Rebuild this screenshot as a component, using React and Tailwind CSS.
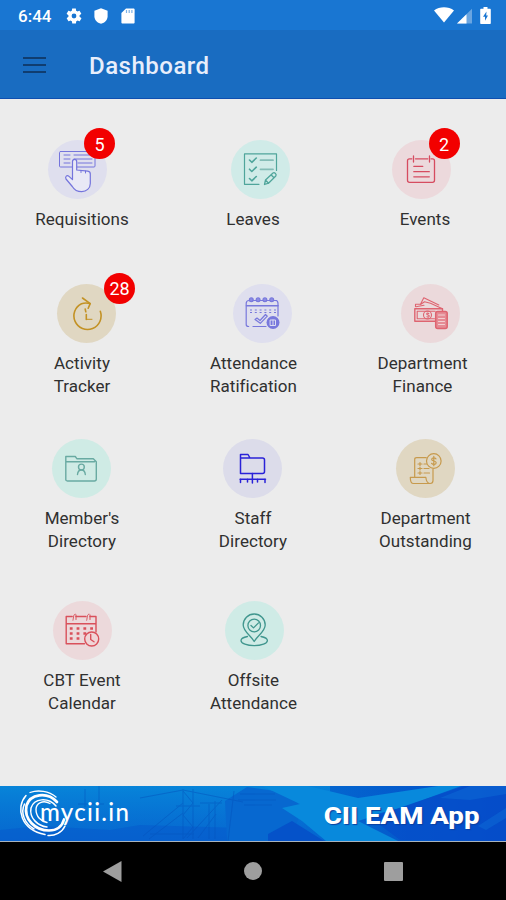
import React from "react";

const RequisitionIcon = () => (
  <g stroke="#7474dc" strokeWidth="1">
    <rect x="11.5" y="11.5" width="35.5" height="15.5" rx="1" />
    <path d="M16 15h6M16 19h6M16 23h6M26 15h18M26 19h18M30 23h14" />
    <path
      d="M24.5 37V21.5a2 2 0 0 1 4.2 0V30l11 1.2c2 .4 2.8 1.4 2.6 3.2v9c0 5-4 8.3-8.5 8.3-5 0-7.5-1.7-9.5-5.2L18 39c-1.2-2.6 1-4.2 3-2.6l3.5 3.200z"
      fill="#e9e9f6"
      strokeWidth="1.2"
    />
    <path d="M33 30.5v2M37.5 31v2" />
  </g>
);

const LeavesIcon = () => (
  <g stroke="#4fa59b" strokeWidth="1.2">
    <path d="M45.5 30.5V13.8H13.5v30.5h14.5" />
    <path d="M18.500 20l2.300 2.300 4.500-4.300M18.500 29.200l2.300 2.300 4.500-4.300M18.500 38.500l2.300 2.300 4.500-4.300" strokeWidth="1.6" />
    <path d="M29.5 20.2h12.500M29.5 29.300h12.500" stroke="#84bcb6" strokeWidth="1.8" />
    <path d="M33.5 44.5l1-4.5 7.500-7c1.500-1 4 1.300 2.800 3l-7.300 7.200zM34.500 40l3 3.200M40 34.800l3 3" strokeWidth="1.3" />
  </g>
);

const EventsIcon = () => (
  <g stroke="#d64c60" strokeWidth="1.3">
    <path d="M19.8 18.8H17.5a2 2 0 0 0-2 2v19.500a2 2 0 0 0 2 2h23a2 2 0 0 0 2-2V20.800a2 2 0 0 0-2-2h-1.500M23.500 18.800h12.300" />
    <path d="M21.5 16v6M37.5 16v6M21.8 26.3h9M21.8 31.7h15.500M21.8 36.8h15.500" />
  </g>
);

const TrackerIcon = () => (
  <g stroke="#c39225" strokeWidth="1.6">
    <path d="M43.3 27.3A13.6 13.6 0 1 1 24.500 19.700q4-1.300 8.500-.2" />
    <path d="M25.5 14l7.700 5.600-2 4.600" />
    <path d="M28.2 25l.6 2.800M29.300 30.500v5" />
    <path d="M30 35.300h5" strokeWidth="1" />
  </g>
);

const RatificationIcon = () => (
  <g stroke="#7878dc" strokeWidth="1.2">
    <path d="M16 16.500c-2 0-2.800 1-2.800 3v21c0 1.500 1 2 2.500 2M20 42.500h13M42.500 16.500c1.800 0 2.500 1 2.500 3V32" />
    <path d="M13.500 21.800h31.500" strokeWidth="1.600" />
    {[18.3, 25.1, 31.9, 38.7].map((x) => (
      <g key={x}>
        <circle cx={x} cy="15.800" r="1.900" fill="#8c8ce4" />
        <path d={`M${x + 2} 16.500h3`} />
      </g>
    ))}
    <path d="M17 26h26M17 28.500h26" strokeDasharray="2 2.800" strokeLinecap="butt" />
    <path d="M22 35.500l2-1.500 3 2.500 5.500-6 1.800 1.600-7 7.200z" />
    <circle cx="40" cy="38.500" r="6.500" fill="#7878dc" stroke="none" />
    <path d="M37.500 36h5v5.500h-5zM40 36v5" stroke="#dedef2" strokeWidth="1" />
  </g>
);

const FinanceIcon = () => (
  <g stroke="#de6470" strokeWidth="1.1">
    <path d="M14.500 22.500v-2.200h5l3.300-6.500 15 7.200M19.500 20.500l4-2.700 6 1.500 12 5.400M15 22.800l8-1.500" />
    <path d="M34 37.200H13.800V24.800h27.700v2" strokeWidth="1.4" />
    <path d="M33.500 34.800H16.200v-7.600h18" />
    <circle cx="26.500" cy="31" r="4" />
    <path d="M27.800 29.500c-2-1.200-3 1-.8 1.500s1 2.800-1 1.700" />
    <rect x="34.700" y="27.500" width="11.500" height="17" rx="2" fill="#e58b94" strokeWidth="1.500" />
    <path d="M37.500 31h6M37.500 34.500h6M37.500 37.500h6M37.500 40.500h6" stroke="#f2cfd2" />
  </g>
);

const MembersIcon = () => (
  <g stroke="#69aaa2" strokeWidth="1.4">
    <path d="M13.800 41V17.500h9.500l1.500 2.200h16.500l3 3V40a2 2 0 0 1-2 2H15.500a1.700 1.700 0 0 1-1.700-1.500zM14 22.700h28.500" />
    <circle cx="29.400" cy="28" r="2.900" />
    <path d="M25.500 35.500c.2-2.600 1.400-4.500 3.900-4.500s3.700 1.900 3.900 4.500" />
  </g>
);

const StaffIcon = () => (
  <g stroke="#2a22d8" strokeWidth="1.5">
    <path d="M17.500 34.500v-19h7.500l2 3.500h12.500a2 2 0 0 1 2 2v11.500a2 2 0 0 1-2 2zM17.500 19h9.500" />
    <path d="M29.400 34.500V44M17 40.300h25.500M17.500 40v3.500M24.500 40v3M34.500 40v3M42 40v3.500" />
  </g>
);

const OutstandingIcon = () => (
  <g stroke="#c79a4d" strokeWidth="1.2">
    <path d="M18.700 38.200V20.500c0-1.200.6-1.800 2-1.800h9.500M37 30v11.500c0 2-1 3-2.800 3H17.500c-2.200 0-3.200-2-3.200-6.200h15.500c.5 4 1.500 6.200 4 6.200" />
    <circle cx="37.800" cy="22" r="7.300" />
    <path d="M40 19.800c-1.300-1.500-4.300-1.200-4.300.6 0 2.200 4.500 1 4.500 3.300 0 1.900-3.300 2.200-4.600.6M37.800 17.300v9.400" />
    <path d="M22 25h4M22 29.500h4M22 34h4M24 23.500v3M24 28v3M24 32.500v3M28 25h2.500M28 29.500h5M28 34h5.500" />
  </g>
);

const CalendarIcon = () => (
  <g stroke="#d9505b" strokeWidth="1.4">
    <path d="M31.500 42.800H13.200V15.500h6M23 15.500h10M37 15.500h6V31M13.200 22.700H43" />
    <path d="M22.300 13.200c-2.200 0-1.500 3-2.300 6M36 13.200c-2.200 0-1.500 3-2.300 6M23 14v4.500M37 14v4.500" strokeWidth="1" />
    <path
      d="M16.800 27.500h24.500M16.800 32.500h17M16.800 37.500h12"
      strokeWidth="2.600"
      strokeDasharray="2.800 4"
      strokeLinecap="butt"
    />
    <circle cx="38.700" cy="38" r="7" fill="#f0d5d7" />
    <path d="M37.700 33.500v5l3.300 2.300" />
  </g>
);

const OffsiteIcon = () => (
  <g stroke="#40968e" strokeWidth="1.3">
    <path d="M22.500 35.500c-4 .8-6.500 2.200-6.500 4 0 3 6 5.200 13.200 5.200s13.200-2.200 13.200-5.200c0-1.800-2.400-3.200-6.400-4" />
    <path d="M29.200 40.500c-3-5.500-11-10-11-16.500a11 11 0 0 1 22 0c0 6.500-8 11-11 16.500z" />
    <circle cx="29.200" cy="24.500" r="6.300" />
    <path d="M26 24.500l2.500 2.400 5-5" />
  </g>
);

const rows = [
  {
    className: "mt-[41px] h-[143.5px]",
    items: [
      { lines: ["Requisitions"], Icon: RequisitionIcon, circle: "bg-[#dfdfee] mr-[9px]", badge: "5", badgeAt: "left-[36px] -top-[12px]" },
      { lines: ["Leaves"], Icon: LeavesIcon, circle: "bg-[#d0ebe8] ml-[14px]" },
      { lines: ["Events"], Icon: EventsIcon, circle: "bg-[#ecd9dc] mr-[6px]", badge: "2", badgeAt: "left-[37px] -top-[12px]", label: "ml-[2px]" },
    ],
  },
  {
    className: "h-[155.5px]",
    items: [
      { lines: ["Activity", "Tracker"], Icon: TrackerIcon, circle: "bg-[#e0d7c2] ml-[9px]", badge: "28", badgeAt: "left-[47px] -top-[11px]" },
      { lines: ["Attendance", "Ratification"], Icon: RatificationIcon, circle: "bg-[#dfdfee] ml-[19px]", label: "ml-[1px]" },
      { lines: ["Department", "Finance"], Icon: FinanceIcon, circle: "bg-[#ebd9db] ml-[12px]", label: "mr-[3px]" },
    ],
  },
  {
    className: "h-[162px]",
    items: [
      { lines: ["Member's", "Directory"], Icon: MembersIcon, circle: "bg-[#cfebe5] mr-[1px]" },
      { lines: ["Staff", "Directory"], Icon: StaffIcon, circle: "bg-[#dcdcea] mr-[1px]" },
      { lines: ["Department", "Outstanding"], Icon: OutstandingIcon, circle: "bg-[#e0d7c2] ml-[3px]", label: "ml-[3px]" },
    ],
  },
  {
    className: "h-[130px]",
    items: [
      { lines: ["CBT Event", "Calendar"], Icon: CalendarIcon, circle: "bg-[#ecd9db]" },
      { lines: ["Offsite", "Attendance"], Icon: OffsiteIcon, circle: "bg-[#cfebe6] ml-[2px]", label: "ml-[1px]" },
    ],
  },
];

const StatusBar = () => (
  <div className="flex h-[30px] shrink-0 items-center bg-[#1976d2] pl-[18px] pr-[15px] text-white">
    <span className="mt-[2px] w-[47px] text-[17px] font-medium leading-none">6:44</span>
    <svg className="mt-px size-[18px]" viewBox="0 0 24 24" fill="currentColor">
      <path d="M19.400 13a7.500 7.500 0 0 0 0-2l2.100-1.600c.2-.2.300-.4.100-.7l-2-3.400c-.1-.2-.4-.3-.6-.2l-2.500 1a7.500 7.500 0 0 0-1.700-1L14.500 2.400c0-.2-.2-.4-.5-.4h-4c-.3 0-.5.200-.5.400l-.4 2.700a7.500 7.500 0 0 0-1.700 1l-2.500-1c-.2-.1-.5 0-.6.2l-2 3.400c-.1.200-.1.500.1.700L4.600 11a7.500 7.500 0 0 0 0 2l-2.100 1.600c-.2.200-.3.400-.1.700l2 3.400c.1.200.4.300.6.2l2.500-1a7.500 7.500 0 0 0 1.700 1l.4 2.700c0 .2.200.4.500.4h4c.3 0 .5-.2.500-.4l.4-2.700a7.500 7.500 0 0 0 1.700-1l2.500 1c.2.100.5 0 .6-.2l2-3.400c.1-.2.1-.5-.1-.7zM12 15.200a3.200 3.200 0 1 1 0-6.400 3.200 3.200 0 0 1 0 6.400z" />
    </svg>
    <svg className="ml-[11px] mt-px h-[16px] w-[14px]" viewBox="0 0 14 16" fill="currentColor">
      <path d="M7 .3 13.600 2.800v5.400c0 3.600-2.700 6.500-6.600 7.500C3.100 14.700.4 11.800.4 8.200V2.800z" />
    </svg>
    <svg className="ml-[13px] mt-px h-[16px] w-[14px]" viewBox="0 0 14 16" fill="currentColor">
      <path d="M5 .4h7.400c.7 0 1.200.5 1.200 1.200v12.800c0 .7-.5 1.200-1.200 1.200H1.600c-.7 0-1.200-.5-1.200-1.200V5z" />
      <path d="M5.500 2v3M8.200 2v3M10.900 2v3" stroke="#7db2e6" strokeWidth="1.2" />
    </svg>
    <svg className="ml-auto h-[16px] w-[20px]" viewBox="0 0 20 16" fill="currentColor">
      <path d="M0 3.400C5.500-.8 14.500-.8 20 3.400L10 15.600z" />
    </svg>
    <svg className="ml-[3px] mt-px h-[16px] w-[15px]" viewBox="0 0 15 16" fill="currentColor">
      <path d="M0 15.500 15 .8v14.700z" opacity=".35" />
      <path d="M0 15.500 9.500 6.200v9.300z" />
    </svg>
    <svg className="ml-[8px] h-[17px] w-[11px]" viewBox="0 0 11 17" fill="currentColor">
      <path d="M3.500 0h4v1.800h2.300c.6 0 1 .4 1 1v13.100c0 .6-.4 1-1 1H1.200c-.6 0-1-.4-1-1V2.800c0-.6.4-1 1-1h2.300z" />
      <path d="M6.500 4.500 3 9.800h2v4l3-5.300H6.200z" fill="#1976d2" />
    </svg>
  </div>
);

const MenuItem = ({ item }) => {
  const { lines, Icon, circle, badge, badgeAt, label } = item;
  return (
    <div className="flex flex-col items-center">
      <div className={`relative size-[59px] shrink-0 rounded-full ${circle}`}>
        <svg className="size-[59px]" viewBox="0 0 59 59" fill="none" strokeLinecap="round" strokeLinejoin="round">
          <Icon />
        </svg>
        {badge && (
          <span
            className={`absolute flex size-[31px] items-center justify-center rounded-full bg-[#f20000] pt-px text-[18px] text-white ${badgeAt}`}
          >
            {badge}
          </span>
        )}
      </div>
      <div className={`mt-[9px] text-center text-[17px] leading-[23px] tracking-[0.050px] text-[#303030] ${label || ""}`}>
        {lines.map((line) => (
          <p key={line} className="whitespace-nowrap">{line}</p>
        ))}
      </div>
    </div>
  );
};

const Banner = () => (
  <div className="relative h-[55px] shrink-0 overflow-hidden bg-gradient-to-r from-[#0871cf] via-[#0870d2] to-[#064bc8]">
    <svg className="absolute inset-0 h-[55px] w-[506px]" viewBox="0 0 506 55" fill="none">
      <defs>
        <linearGradient id="shade" x1="0" y1="0" x2="0" y2="1">
          <stop offset="0" stopColor="#078bdc" stopOpacity=".75" />
          <stop offset="1" stopColor="#0560d0" stopOpacity=".5" />
        </linearGradient>
      </defs>
      <path d="M0 0h330v55H0z" fill="url(#shade)" />
      <path d="M0 44 40 40l70 4 30-5 130 4v12H0z" fill="#0558cc" opacity=".5" />
      <path d="M225 15l22-14 35 5 20 14-6 20-27 8v7h-42z" fill="#0768d0" />
      <path d="M262 0h46l50 12 80-12h26l-74 25-32 10 40 20h-72l-24-20-20-13 18-4z" fill="#0889dc" />
      <path d="M268 48l24-13 32 20h-56z" fill="#0552c9" />
      <path d="M368 30l32 24h106V0h-45l-60 22z" fill="#064dca" opacity=".75" />
      <path d="M440 12l30-12h36v8l-36 6zM478 40l28-18v10l-20 12z" fill="#0b68d4" opacity=".6" />
      <g stroke="#0554be" opacity=".5">
        <path d="M183 3v50M193 3v50M183 5l10 12-10 12 10 12-10 12M143 50l40-33M149 53l34-26M150 48h44M187 52l35-38M198 52l18-24M209 18v35M215 15v38M200 17h22M176 20h24M85 3v18M99 0v18M78 18h26M240 8h35M238 14h38M244 19h28" />
        <path d="M228 55l6-50M140 12l43-8 60 12" />
      </g>
    </svg>
    <div className="relative flex h-full items-center">
      <svg className="ml-[19px] h-[48px] w-[50px]" viewBox="0 0 50 48" fill="none" stroke="#fff" strokeLinecap="round">
        <path d="M7 5.500C-4 18 2 40 26 44.500" strokeWidth="1.500" />
        <path d="M11 2.500C19-.5 30 1 37 7" strokeWidth="1.300" />
        <path d="M38 12C28 1 11 4 7.500 15.500c-3 14 9 25 22.500 25 8 0 13-4 15-11" strokeWidth="2.700" />
        <path d="M37 16C29 7 15 8 12 18c-2 10 7 18 16 19" strokeWidth="1.500" />
        <path d="M31 13.500c-7-4-14-.5-14 6 0 7 5 12 11 13" strokeWidth="1.400" />
        <path d="M29 45.500c7 .5 14-3 17-9.500M5.500 14C1 23 6 34 15 39" strokeWidth="1.500" />
      </svg>
      <span className="-ml-[29px] -mt-[4px] w-[150px] font-['Lato','Open_Sans',sans-serif] text-[24px] font-medium leading-none tracking-[1.300px] text-white">
        mycii.in
      </span>
      <span className="ml-auto mr-[27px] mt-[4px] origin-right scale-x-[1.150] font-['Roboto',sans-serif] text-[24px] font-extrabold leading-none text-white [text-shadow:1px_1px_1px_#0b3fa0]">
        CII EAM App
      </span>
    </div>
  </div>
);

const App = () => {
  return (
    <div className="flex h-[900px] w-[506px] flex-col overflow-hidden bg-[#ececec] font-['Roboto',sans-serif]">
      <StatusBar />
      <header className="flex h-[69px] shrink-0 items-center border-b border-[#0e4fb0] bg-[#196cc1] pl-[23px] pt-[2px]">
        <div className="flex w-[66px] flex-col gap-[5px]">
          <span className="h-[2px] w-[23px] bg-[#103d70]" />
          <span className="h-[2px] w-[23px] bg-[#103d70]" />
          <span className="h-[2px] w-[23px] bg-[#103d70]" />
        </div>
        <h1 className="mt-px text-[24px] font-medium tracking-[0.500px] text-[#e8eefb]">Dashboard</h1>
      </header>

      <main className="flex-1">
        {rows.map((row, i) => (
          <section key={i} className={`grid grid-cols-[164px_178px_164px] ${row.className}`}>
            {row.items.map((item) => (
              <MenuItem key={item.lines.join(" ")} item={item} />
            ))}
          </section>
        ))}
      </main>

      <Banner />

      {/* Android navigation */}
      <nav className="flex h-[59px] shrink-0 items-center justify-between border-t border-[#a9b3bd] bg-black px-[103px]">
        <svg className="h-[21px] w-[19px]" viewBox="0 0 19 21" fill="#9e9e9e">
          <path d="M0 10.500 18.500 0v21z" />
        </svg>
        <span className="size-[18px] rounded-full bg-[#9e9e9e]" />
        <span className="size-[19px] rounded-[1px] bg-[#9e9e9e]" />
      </nav>
    </div>
  );
};

export default App;
